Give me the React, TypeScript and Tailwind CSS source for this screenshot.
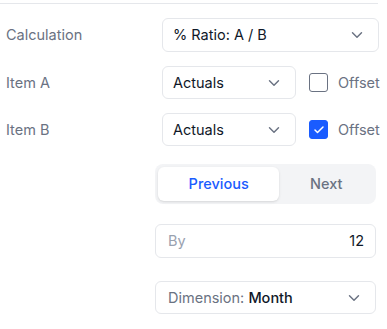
import React, { useState } from 'react';
import { ChevronDown, Check } from 'lucide-react';

const font = { fontFamily: 'Inter, "Noto Sans", sans-serif' };

const SelectBox = ({ value, className }: { value: React.ReactNode; className: string }) => (
  <div className={`flex items-center justify-between rounded-md border border-gray-200 bg-white pl-[10px] pr-[12px] text-[14.5px] text-gray-900 ${className}`}>
    <span>{value}</span>
    <ChevronDown className="h-[18px] w-[18px] text-gray-500" strokeWidth={1.9} />
  </div>
);

const Offset = ({ checked, onToggle }: { checked: boolean; onToggle: () => void }) => (
  <label className="ml-[13px] flex cursor-pointer items-center gap-[10px] text-[14.5px] text-gray-500">
    <span
      onClick={onToggle}
      className={`flex h-[19px] w-[19px] items-center justify-center rounded-[3px] border ${checked ? 'border-[#1a5cff] bg-[#1a5cff]' : 'border-gray-500 bg-white'}`}
    >
      {checked && <Check className="h-3 w-3 text-white" strokeWidth={3} />}
    </span>
    Offset
  </label>
);

const App = () => {
  const [offsetA, setOffsetA] = useState(false);
  const [offsetB, setOffsetB] = useState(true);
  const [dir, setDir] = useState('prev');

  return (
    <div className="h-[329px] w-[387px] bg-white pt-[3px]" style={font}>
      <div className="w-[378px] border-t border-gray-200" />

      {/* calculation rows */}
      <div className="mt-[14px] flex flex-col gap-[14px]">
        <div className="flex items-center">
          <span className="w-[162px] pl-[6px] text-[14.5px] text-gray-500">Calculation</span>
          <SelectBox value="% Ratio: A / B" className="h-[34px] w-[217px]" />
        </div>
        <div className="flex items-center">
          <span className="w-[162px] pl-[6px] text-[14.5px] text-gray-500">Item A</span>
          <SelectBox value="Actuals" className="h-[33px] w-[134px]" />
          <Offset checked={offsetA} onToggle={() => setOffsetA(!offsetA)} />
        </div>
        <div className="flex items-center">
          <span className="w-[162px] pl-[6px] text-[14.5px] text-gray-500">Item B</span>
          <SelectBox value="Actuals" className="h-[33px] w-[134px]" />
          <Offset checked={offsetB} onToggle={() => setOffsetB(!offsetB)} />
        </div>
      </div>

      {/* period controls */}
      <div className="ml-[155px] mt-[18px] w-[221px]">
        <div className="flex h-[40px] rounded-lg bg-gray-100 p-[3px] text-[14.5px] font-medium">
          <button
            onClick={() => setDir('prev')}
            className={`flex-auto rounded-md ${dir === 'prev' ? 'bg-white text-[#1a5cff] shadow-sm' : 'text-gray-500'}`}
          >
            Previous
          </button>
          <button
            onClick={() => setDir('next')}
            className={`flex-auto rounded-md ${dir === 'next' ? 'bg-white text-[#1a5cff] shadow-sm' : 'text-gray-500'}`}
          >
            Next
          </button>
        </div>

        <div className="mt-[20px] flex h-[34px] items-center justify-between rounded-md border border-gray-200 pl-[12px] pr-[11px] text-[14.5px]">
          <span className="text-gray-400">By</span>
          <span className="text-gray-900">12</span>
        </div>

        <SelectBox
          value={
            <>
              <span className="text-gray-500">Dimension: </span>
              <span className="font-medium text-gray-900">Month</span>
            </>
          }
          className="mt-[23px] h-[33px] w-full !pl-[12px] !pr-[12px]"
        />
      </div>
    </div>
  );
};

export default App;
